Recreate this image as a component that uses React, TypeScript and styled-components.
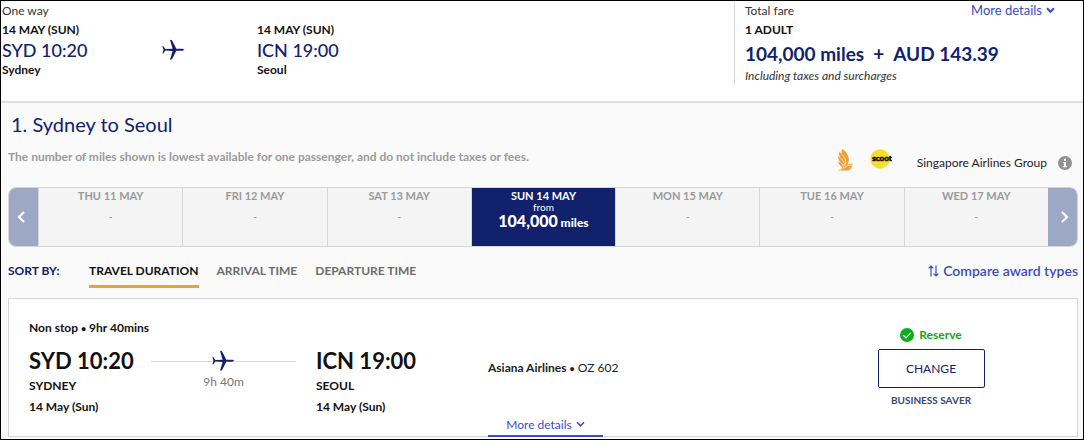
import React from 'react';
import styled, { createGlobalStyle } from 'styled-components';

const navy = '#12216b';
const link = '#3a4cc0';
const line = '#d6d6d8';

const GlobalStyle = createGlobalStyle`
  *, *::before, *::after { box-sizing: border-box; }
  body {
    margin: 0;
    background: #fafafa;
    color: #111;
    font-family: Lato, "Liberation Sans", sans-serif;
    font-size: 12px;
    line-height: 20px;
  }
  h2, p, ul { margin: 0; padding: 0; }
  button { font: inherit; color: inherit; background: none; border: 0; padding: 0; cursor: pointer; }
  a { text-decoration: none; }
  svg { display: block; flex: none; }
`;

const Page = styled.div`
  border: 1px solid #000;
  background: #fafafa;
  padding-bottom: 2px;
  overflow: hidden;
`;

const Summary = styled.header`
  display: grid;
  grid-template-columns: minmax(0, 1fr) 349px;
  padding-bottom: 17px;
  background: #fff;
  border-bottom: 2px solid #e0e0e2;
`;

const Itinerary = styled.section`
  padding-left: 1px;
`;

const Caption = styled.div`
  line-height: 19px;
  color: #333;
`;

const Legs = styled.div`
  display: grid;
  grid-template-columns: 160px 95px 1fr;
`;

const PlaneCell = styled.div`
  padding-top: 19px;
`;

const Strong = styled.div`
  font-weight: 700;
`;

const LegTime = styled.div`
  font-size: 18px;
  font-weight: 500;
  color: ${navy};
`;

const Fare = styled.section`
  border-left: 1px solid ${line};
  padding: 0 28px 0 10px;
`;

const FareTop = styled.div`
  display: flex;
  justify-content: space-between;
`;

const Miles = styled.div`
  display: flex;
  gap: 9px;
  font-size: 19px;
  line-height: 28px;
  font-weight: 700;
  color: ${navy};
`;

const Note = styled.div`
  line-height: 16px;
  font-style: italic;
  color: #333;
`;

const TextLink = styled.a<{ $size?: number; $weight?: number }>`
  display: flex;
  align-items: center;
  gap: 4px;
  font-size: ${p => p.$size ?? 13}px;
  font-weight: ${p => p.$weight ?? 400};
  line-height: 19px;
  color: ${link};
`;

const Results = styled.main`
  padding: 6px 5px 0 7px;
`;

const Title = styled.h2`
  padding-left: 3px;
  font-size: 20px;
  line-height: 30px;
  font-weight: 400;
  color: ${navy};
`;

const Intro = styled.div`
  display: flex;
  justify-content: space-between;
  align-items: flex-start;
  padding-top: 8px;
`;

const Disclaimer = styled.p`
  font-weight: 700;
  color: #9a9a9a;
`;

const Group = styled.div`
  display: flex;
  align-items: center;
  gap: 11px;
  height: 40px;
  padding: 0 6px 9px 0;
  color: #222;
`;

const Logos = styled.div`
  display: flex;
  gap: 16px;
  margin: 0 14px 5px 0;
`;

const Week = styled.div`
  display: flex;
  height: 60px;
  border: 1px solid ${line};
  border-radius: 8px;
  overflow: hidden;
  background: #f4f4f4;
`;

const Step = styled.button`
  width: 29px;
  display: flex;
  align-items: center;
  justify-content: center;
  background: #9da8c5;
  &:first-child { padding-right: 4px; }
  &:last-child { padding-left: 4px; }
`;

const Day = styled.button<{ $active?: boolean }>`
  flex: 1 1 0;
  display: flex;
  flex-direction: column;
  align-items: center;
  padding-top: 1px;
  border-left: 1px solid ${line};
  font-size: 11px;
  line-height: 12px;
  color: ${p => (p.$active ? '#fff' : '#9a9a9a')};
  background: ${p => (p.$active ? navy : 'transparent')};
`;

const DayName = styled.span`
  font-weight: 700;
  line-height: 14px;
`;

const NoFare = styled.span`
  padding-top: 8px;
`;

const From = styled.span`
  font-size: 10px;
  line-height: 9px;
`;

const DayFare = styled.span`
  font-size: 12px;
  font-weight: 900;
  line-height: 18px;
  b { font-size: 16px; font-weight: 900; }
`;

const SortBar = styled.div`
  display: flex;
  align-items: flex-start;
  height: 51px;
  padding-top: 14px;
`;

const SortLabel = styled.span`
  width: 81px;
  font-weight: 700;
  color: ${navy};
`;

const Sorts = styled.div`
  display: flex;
  flex: 1;
  gap: 18px;
`;

const Sort = styled.button<{ $active?: boolean }>`
  height: 27px;
  padding-bottom: 4px;
  border-bottom: 3px solid ${p => (p.$active ? '#eba423' : 'transparent')};
  font-weight: 700;
  line-height: 20px;
  color: ${p => (p.$active ? '#111' : '#6c6c6c')};
`;

const Card = styled.article`
  display: grid;
  grid-template-columns: 459px minmax(0, 1fr) 292px;
  padding-left: 20px;
  background: #fff;
  border: 1px solid ${line};
`;

const Flight = styled.div`
  padding: 19px 0;
`;

const Route = styled.div`
  display: grid;
  grid-template-columns: 122px 145px 1fr;
  padding-top: 7px;
`;

const Airport = styled.div<{ $end?: boolean }>`
  padding-left: ${p => (p.$end ? 20 : 0)}px;
  font-weight: 700;
  line-height: 21px;
`;

const Clock = styled.div`
  font-size: 22px;
  line-height: 29px;
`;

const Duration = styled.div`
  display: flex;
  flex-direction: column;
  align-items: center;
  padding-top: 4px;
  color: #777;
`;

const Track = styled.div`
  display: flex;
  align-items: center;
  width: 100%;
  &::before, &::after { content: ''; flex: 1; border-top: 1px solid ${line}; }
`;

const Operator = styled.div`
  display: flex;
  flex-direction: column;
  align-items: flex-start;
  padding-top: 59px;
  color: #222;
  a {
    width: 115px;
    height: 22px;
    margin: auto 0 -1px;
    padding-bottom: 2px;
    justify-content: center;
    border-bottom: 2px solid ${link};
  }
`;

const Dot = styled.span`
  font-size: 9px;
  font-weight: 700;
`;

const Choice = styled.div`
  display: flex;
  flex-direction: column;
  align-items: center;
  padding-top: 26px;
`;

const Reserve = styled.div`
  display: flex;
  align-items: center;
  gap: 5px;
  font-weight: 700;
  color: #0caa1c;
`;

const Change = styled.button`
  width: 107px;
  height: 39px;
  margin: 4px 0 2px;
  border: 1px solid ${navy};
  border-radius: 2px;
  color: ${navy};
`;

const Cabin = styled.div`
  font-size: 10px;
  font-weight: 700;
  color: #35477a;
`;

const Plane = () => (
  <svg width="23" height="22" viewBox="0 0 23 22" fill={navy} aria-hidden="true">
    <path d="M22.5 10.7 L20.5 9.8 H14.3 L10 1.2 L8 .7 L10.6 9.7 L3.4 10 L1.2 7 H.4 L1.5 10.8 L.4 14.6 H1.2 L3.4 11.6 L10.6 11.9 L8 20.8 L10 20.3 L14.3 11.7 H20.5 Z" />
  </svg>
);

const Down = ({ bold }: { bold?: boolean }) => (
  <svg width="9" height="7" viewBox="0 0 9 7" fill="none" stroke={link} strokeWidth={bold ? 2 : 1.5} aria-hidden="true">
    <path d="M1 1.2 4.5 4.8 8 1.2" />
  </svg>
);

const Arrow = ({ d }: { d: string }) => (
  <svg width="9" height="14" viewBox="0 0 9 14" fill="none" stroke="#fff" strokeWidth="2.2" aria-hidden="true">
    <path d={d} />
  </svg>
);

const Bird = () => (
  <svg width="17" height="22" viewBox="0 0 17 22" role="img" aria-label="Singapore Airlines">
    <path fill="#f09f35" d="M5.2 0C8.6 2.2 11.4 5.6 11.8 9.5 12 12 11.2 14 10.8 15.4L15.8 14.4C15.4 17.8 14 20.2 11.4 21.6H.6C2.4 20.8 4.4 19.6 5.2 18.2 3 16.8 1.3 14.6 1 12.2L3.8 13.8C2 11.8 1 9.5 1.1 7L3.6 9.2C2.3 7.2 1.7 4.9 2.2 2.6L4.9 5.6C4.3 3.8 4.4 1.8 5.2 0Z" />
    <path fill="none" stroke="#fdf3e4" strokeWidth=".8" d="M4.9 5.4C7.6 8 9.2 11 8.8 15.6M3.7 9.2C6.2 11.4 7.6 13.6 7.4 16.8M3.8 13.7C5.2 14.9 6.2 16.2 6.3 17.8M2.8 20.6C6.5 20 8.5 17.6 11 16.4L15.6 15.8" />
  </svg>
);

const Scoot = () => (
  <svg width="22" height="20" viewBox="0 0 22 20" role="img" aria-label="Scoot">
    <circle cx="10" cy="10" r="9.7" fill="#f8df25" />
    <text x="12" y="12" textAnchor="middle" fontFamily="Lato, sans-serif" fontWeight="900" fontSize="8" fill="#111" stroke="#111" strokeWidth=".6">scoot</text>
  </svg>
);

const Info = () => (
  <svg width="14" height="14" viewBox="0 0 14 14" role="img" aria-label="Information">
    <circle cx="7" cy="7" r="7" fill="#919191" />
    <path fill="#fff" d="M6 2.8h2v2H6zM5.2 6H8v4h.9v1.3H5.2V10H6V7.2h-.8z" />
  </svg>
);

const Compare = () => (
  <svg width="11" height="12" viewBox="0 0 11 12" fill="none" stroke={link} strokeWidth="1.2" aria-hidden="true">
    <path d="M3 11.5V1M.6 3.4 3 1 5.4 3.4M8 .5V11M5.6 8.6 8 11 10.4 8.6" />
  </svg>
);

const Tick = () => (
  <svg width="14" height="14" viewBox="0 0 14 14" aria-hidden="true">
    <circle cx="7" cy="7" r="7" fill="#0cae1c" />
    <path d="M3.2 7.2 6 9.8 10.8 4.8" fill="none" stroke="#fff" strokeWidth="1.2" />
  </svg>
);

const days = ['THU 11 MAY', 'FRI 12 MAY', 'SAT 13 MAY', 'SUN 14 MAY', 'MON 15 MAY', 'TUE 16 MAY', 'WED 17 MAY'];
const sorts = ['TRAVEL DURATION', 'ARRIVAL TIME', 'DEPARTURE TIME'];

export default function App() {
  return (
    <>
      <GlobalStyle />
      <Page>
        <Summary>
          <Itinerary>
            <Caption>One way</Caption>
            <Legs>
              <div>
                <Strong>14 MAY (SUN)</Strong>
                <LegTime>SYD 10:20</LegTime>
                <Strong>Sydney</Strong>
              </div>
              <PlaneCell><Plane /></PlaneCell>
              <div>
                <Strong>14 MAY (SUN)</Strong>
                <LegTime>ICN 19:00</LegTime>
                <Strong>Seoul</Strong>
              </div>
            </Legs>
          </Itinerary>
          <Fare>
            <FareTop>
              <Caption>Total fare</Caption>
              <TextLink href="#fare">More details <Down bold /></TextLink>
            </FareTop>
            <Strong>1 ADULT</Strong>
            <Miles><span>104,000 miles</span><span>+</span><span>AUD 143.39</span></Miles>
            <Note>Including taxes and surcharges</Note>
          </Fare>
        </Summary>

        <Results>
          <Title>1. Sydney to Seoul</Title>
          <Intro>
            <Disclaimer>The number of miles shown is lowest available for one passenger, and do not include taxes or fees.</Disclaimer>
            <Group>
              <Logos><Bird /><Scoot /></Logos>
              <span>Singapore Airlines Group</span>
              <Info />
            </Group>
          </Intro>

          <Week>
            <Step aria-label="Previous dates"><Arrow d="M7 2 2 7 7 12" /></Step>
            {days.map((day, i) => (
              <Day key={day} $active={i === 3}>
                <DayName>{day}</DayName>
                {i === 3 ? (
                  <>
                    <From>from</From>
                    <DayFare><b>104,000</b> miles</DayFare>
                  </>
                ) : (
                  <NoFare>-</NoFare>
                )}
              </Day>
            ))}
            <Step aria-label="Next dates"><Arrow d="M2 2 7 7 2 12" /></Step>
          </Week>

          <SortBar>
            <SortLabel>SORT BY:</SortLabel>
            <Sorts>
              {sorts.map((name, i) => <Sort key={name} $active={i === 0}>{name}</Sort>)}
            </Sorts>
            <TextLink href="#compare" $size={14} $weight={600}><Compare /> Compare award types</TextLink>
          </SortBar>

          <Card>
            <Flight>
              <Strong>Non stop <Dot>•</Dot> 9hr 40mins</Strong>
              <Route>
                <Airport>
                  <Clock>SYD 10:20</Clock>
                  <div>SYDNEY</div>
                  <div>14 May (Sun)</div>
                </Airport>
                <Duration>
                  <Track><Plane /></Track>
                  <span>9h 40m</span>
                </Duration>
                <Airport $end>
                  <Clock>ICN 19:00</Clock>
                  <div>SEOUL</div>
                  <div>14 May (Sun)</div>
                </Airport>
              </Route>
            </Flight>
            <Operator>
              <span><b>Asiana Airlines</b> <Dot>•</Dot> OZ 602</span>
              <TextLink href="#flight" $size={12}>More details <Down /></TextLink>
            </Operator>
            <Choice>
              <Reserve><Tick /> Reserve</Reserve>
              <Change>CHANGE</Change>
              <Cabin>BUSINESS SAVER</Cabin>
            </Choice>
          </Card>
        </Results>
      </Page>
    </>
  );
}
